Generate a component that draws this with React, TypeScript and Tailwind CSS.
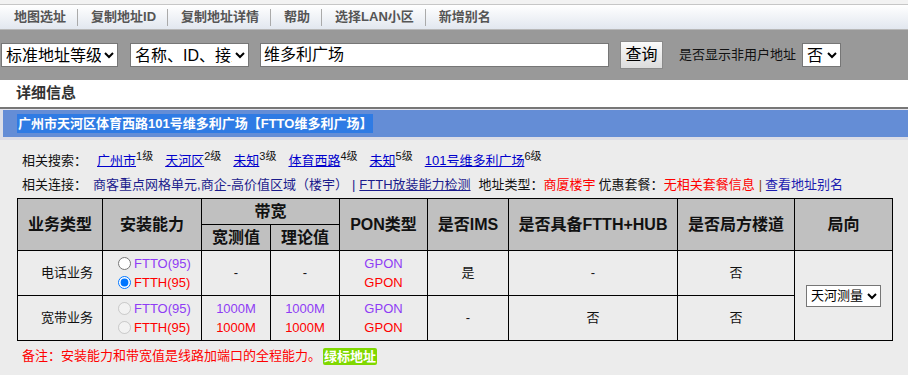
import React from "react"

const menuItems = ["地图选址", "复制地址ID", "复制地址详情", "帮助", "选择LAN小区", "新增别名"]

const searchLinks = [
  { name: "广州市", level: "1级" },
  { name: "天河区", level: "2级" },
  { name: "未知", level: "3级" },
  { name: "体育西路", level: "4级" },
  { name: "未知", level: "5级" },
  { name: "101号维多利广场", level: "6级" },
]

const th = "border border-black bg-[#c0c0c0] text-[16px] font-bold text-[#111] text-center align-middle"
const td = "border border-black text-[13px] text-[#111] text-center align-middle"

const App = () => {
  const [mode, setMode] = React.useState("ftth")

  return (
    <div className="min-h-screen w-[908px] bg-[#ececec] font-['Liberation_Sans','Noto_Sans_CJK_SC',sans-serif] text-black">
      {/* top menu */}
      <div className="bg-[#f2f2f2] pt-[4px]">
        <div className="flex h-[26px] items-center border-t border-b border-t-[#c6c6c6] border-b-[#b8b8b8] bg-linear-to-b from-white to-[#e2e7ef] pl-[1px] text-[13px] font-bold text-[#555]">
          {menuItems.map((item, i) => (
            <React.Fragment key={item}>
              {i > 0 && <span className="h-[17px] w-px bg-[#aaaaaa]" />}
              <span className="pl-[13px] pr-[11px] cursor-pointer">{item}</span>
            </React.Fragment>
          ))}
        </div>
      </div>

      {/* search bar */}
      <div className="flex h-[50px] items-center bg-[#999999] pl-[1px]">
        <select className="h-[24px] w-[117px] border border-[#767676] bg-white text-[16px] text-black">
          <option>标准地址等级</option>
        </select>
        <select className="ml-[12px] h-[24px] w-[119px] border border-[#767676] bg-white text-[16px] text-black">
          <option>名称、ID、接入号</option>
        </select>
        <input
          defaultValue="维多利广场"
          className="ml-[11px] h-[24px] w-[349px] border border-[#767676] bg-white px-[3px] text-[16px] text-black"
        />
        <button className="ml-[11px] h-[28px] w-[43px] border border-[#8a8a8a] bg-linear-to-b from-[#fafafa] to-[#dcdcdc] text-[16px] text-black">
          查询
        </button>
        <span className="ml-[16px] text-[13px] text-[#111]">是否显示非用户地址</span>
        <select className="ml-[6px] h-[24px] w-[39px] border border-[#767676] bg-white text-[16px] text-black">
          <option>否</option>
          <option>是</option>
        </select>
      </div>

      {/* detail title */}
      <div className="flex h-[27px] items-center bg-white pl-[16px] text-[15px] font-bold text-[#333]">详细信息</div>
      <div className="h-[2px] bg-[#777777]" />
      <div className="h-[1px] bg-[#e4e4ec]" />

      {/* address bar */}
      <div className="flex h-[27px] items-center border-l-[3px] border-[#dcdfe8] bg-[#648dd6] pl-[14px]">
        <span className="bg-[#2f7be4] px-[1px] text-[13px] font-bold leading-[19px] text-white">
          广州市天河区体育西路101号维多利广场【FTTO维多利广场】
        </span>
      </div>
      <div className="h-[3px] bg-[#dcdde6]" />

      {/* related search */}
      <div className="mt-[9px] flex h-[24px] items-center pl-[22px] text-[13px] text-[#111]">
        <span className="mr-[10px]">相关搜索：</span>
        {searchLinks.map((l, i) => (
          <span key={i} className="mr-[12px] flex items-center">
            <a className="cursor-pointer text-[#0000cc] underline">{l.name}</a>
            <span className="relative -top-[5px] text-[11px]">{l.level}</span>
          </span>
        ))}
      </div>

      {/* related links */}
      <div className="flex h-[24px] items-center whitespace-nowrap pl-[22px] text-[13px] text-[#111]">
        <span>相关连接：</span>
        <span className="ml-[6px] text-[#1c1c8c]">商客重点网格单元,商企-高价值区域（楼宇）</span>
        <span className="ml-[4px] text-[#1c1c8c]">|</span>
        <a className="ml-[4px] cursor-pointer text-[#1c1c8c] underline">FTTH放装能力检测</a>
        <span className="ml-[8px]">地址类型：</span>
        <span className="text-[#ff0000]">商厦楼宇</span>
        <span className="ml-[3px]">优惠套餐：</span>
        <span className="text-[#ff0000]">无相关套餐信息</span>
        <span className="ml-[4px] text-[#8b4513]">|</span>
        <a className="ml-[3px] cursor-pointer text-[#1c1cb0]">查看地址别名</a>
      </div>

      {/* table */}
      <div className="mt-[1px] pl-[17px]">
        <table className="w-[875px] table-fixed border-collapse">
          <colgroup>
            <col className="w-[85px]" />
            <col className="w-[99px]" />
            <col className="w-[69px]" />
            <col className="w-[69px]" />
            <col className="w-[88px]" />
            <col className="w-[81px]" />
            <col className="w-[169px]" />
            <col className="w-[117px]" />
            <col className="w-[98px]" />
          </colgroup>
          <thead>
            <tr className="h-[26px]">
              <th rowSpan={2} className={th}>业务类型</th>
              <th rowSpan={2} className={th}>安装能力</th>
              <th colSpan={2} className={th}>带宽</th>
              <th rowSpan={2} className={th}>PON类型</th>
              <th rowSpan={2} className={th}>是否IMS</th>
              <th rowSpan={2} className={th}>是否具备FTTH+HUB</th>
              <th rowSpan={2} className={th}>是否局方楼道</th>
              <th rowSpan={2} className={th}>局向</th>
            </tr>
            <tr className="h-[26px]">
              <th className={th}>宽测值</th>
              <th className={th}>理论值</th>
            </tr>
          </thead>
          <tbody>
            <tr className="h-[45px]">
              <td className={td + " pl-[14px]"}>电话业务</td>
              <td className="border border-black pl-[15px] text-[13px] leading-[19px]">
                <label className="flex items-center gap-[3px] text-[#8f3cf5]">
                  <input type="radio" name="mode" checked={mode === "ftto"} onChange={() => setMode("ftto")} />
                  FTTO(95)
                </label>
                <label className="flex items-center gap-[3px] text-[#ff0000]">
                  <input type="radio" name="mode" checked={mode === "ftth"} onChange={() => setMode("ftth")} />
                  FTTH(95)
                </label>
              </td>
              <td className={td}>-</td>
              <td className={td}>-</td>
              <td className={td + " leading-[19px]"}>
                <div className="text-[#8f3cf5]">GPON</div>
                <div className="text-[#ff0000]">GPON</div>
              </td>
              <td className={td}>是</td>
              <td className={td}>-</td>
              <td className={td}>否</td>
              <td rowSpan={2} className={td}>
                <select className="h-[22px] w-[75px] border border-[#767676] bg-white text-[13px] text-black">
                  <option>天河测量</option>
                </select>
              </td>
            </tr>
            <tr className="h-[45px]">
              <td className={td + " pl-[14px]"}>宽带业务</td>
              <td className="border border-black pl-[15px] text-[13px] leading-[19px]">
                <label className="flex items-center gap-[3px] text-[#8f3cf5]">
                  <input type="radio" name="mode2" disabled />
                  FTTO(95)
                </label>
                <label className="flex items-center gap-[3px] text-[#ff0000]">
                  <input type="radio" name="mode2" disabled />
                  FTTH(95)
                </label>
              </td>
              <td className={td + " leading-[19px]"}>
                <div className="text-[#8f3cf5]">1000M</div>
                <div className="text-[#ff0000]">1000M</div>
              </td>
              <td className={td + " leading-[19px]"}>
                <div className="text-[#8f3cf5]">1000M</div>
                <div className="text-[#ff0000]">1000M</div>
              </td>
              <td className={td + " leading-[19px]"}>
                <div className="text-[#8f3cf5]">GPON</div>
                <div className="text-[#ff0000]">GPON</div>
              </td>
              <td className={td}>-</td>
              <td className={td}>否</td>
              <td className={td}>否</td>
            </tr>
          </tbody>
        </table>
      </div>

      {/* note */}
      <div className="mt-[5px] flex h-[20px] items-center pl-[22px] text-[13px] text-[#ff0000]">
        <span>备注：安装能力和带宽值是线路加端口的全程能力。</span>
        <span className="ml-[2px] rounded-[2px] bg-[#7fd800] px-[1px] text-[13px] font-bold leading-[17px] text-white">
          绿标地址
        </span>
      </div>
    </div>
  )
}

export default App
